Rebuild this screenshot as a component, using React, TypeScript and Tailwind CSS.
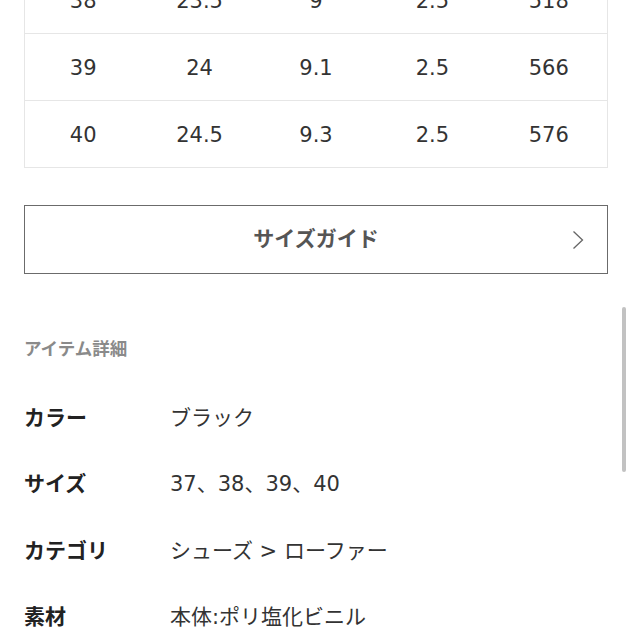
const rows = [
  ["38", "23.5", "9", "2.5", "518"],
  ["39", "24", "9.1", "2.5", "566"],
  ["40", "24.5", "9.3", "2.5", "576"],
];

const details = [
  ["カラー", "ブラック"],
  ["サイズ", "37、38、39、40"],
  ["カテゴリ", "シューズ > ローファー"],
  ["素材", "本体:ポリ塩化ビニル"],
];

export default function App() {
  return (
    <div
      className="relative w-[632px] h-[632px] overflow-hidden bg-white"
      style={{ fontFamily: "'DejaVu Sans', 'Noto Sans CJK JP', sans-serif" }}
    >
      {/* サイズ表 (上は切れている) */}
      <div className="mx-6 -mt-[34px] border border-[#e6e6e6]">
        {rows.map((r, i) => (
          <div
            key={r[0]}
            className={`grid grid-cols-5 h-[66px] items-center pt-[3px] text-[21px] text-[#333] ${
              i > 0 ? "border-t border-[#e6e6e6] h-[67px]" : ""
            }`}
          >
            {r.map((c, j) => (
              <div key={j} className="text-center">
                {c}
              </div>
            ))}
          </div>
        ))}
      </div>

      {/* サイズガイド */}
      <button className="relative mx-6 mt-[37px] flex h-[69px] w-[584px] items-center justify-center border border-[#6b6b6b] bg-white">
        <span className="text-[21px] font-bold text-[#555]">サイズガイド</span>
        <svg
          className="absolute right-[23px] top-1/2 -translate-y-1/2"
          width="12"
          height="20"
          viewBox="0 0 12 20"
          fill="none"
        >
          <path d="M1.5 1.5 L10.5 10 L1.5 18.5" stroke="#666" strokeWidth="1.3" />
        </svg>
      </button>

      {/* アイテム詳細 */}
      <div className="mx-6 mt-[63px] text-[17.5px] leading-[25px] font-bold text-[#8a8a8a]">
        アイテム詳細
      </div>

      <div className="mx-6 mt-[23px]">
        {details.map(([k, v]) => (
          <div key={k} className="flex h-[66.5px] items-center text-[21px]">
            <div className="w-[146px] font-bold text-[#222]">{k}</div>
            <div className="text-[#333]">{v}</div>
          </div>
        ))}
      </div>

      {/* スクロールバー */}
      <div className="absolute right-[6px] top-[307px] h-[165px] w-[4px] rounded-full bg-[#c2c2c2]" />
    </div>
  );
}
